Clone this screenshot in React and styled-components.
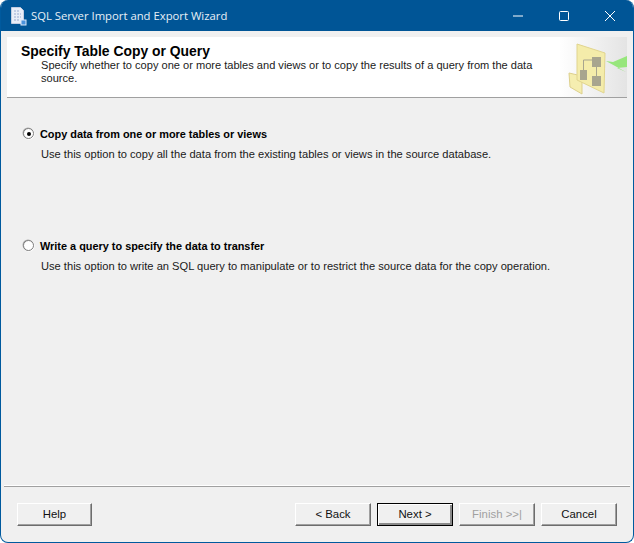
import React from "react";
import styled, { createGlobalStyle } from "styled-components";

const Global = createGlobalStyle`
  html, body { margin: 0; padding: 0; background: #ffffff; }
  #root { width: 634px; height: 543px; }
`;

const Win = styled.div`
  box-sizing: border-box;
  width: 634px;
  height: 543px;
  display: flex;
  flex-direction: column;
  background: #f0f0f0;
  border: 1px solid #005a9e;
  border-top: none;
  border-radius: 8px;
  overflow: hidden;
  font-family: "Liberation Sans", Arial, sans-serif;
  font-size: 11px;
  color: #111;
`;

const TitleBar = styled.div`
  height: 31px;
  flex: none;
  background: #005596;
  display: flex;
  align-items: center;
  padding-left: 9px;
  color: #fff;
`;

const TitleText = styled.div`
  margin-left: 4px;
  font-family: "Open Sans", "Liberation Sans", sans-serif;
  font-size: 11.3px;
  white-space: nowrap;
  color: #e8f0f7;
  flex: 1;
`;

const WinButton = styled.div`
  width: 46px;
  height: 31px;
  display: flex;
  align-items: center;
  justify-content: center;
`;

const Body = styled.div`
  flex: 1;
  display: flex;
  flex-direction: column;
  padding: 6px 6px 0 6px;
  min-height: 0;
`;

const Header = styled.div`
  height: 61px;
  box-sizing: border-box;
  flex: none;
  background: linear-gradient(90deg, #ffffff 0 89%, #e4e4e4 100%);
  border-bottom: 1px solid #a0a0a0;
  display: flex;
  position: relative;
  overflow: hidden;
`;

const HeaderText = styled.div`
  padding: 7px 0 0 14px;
  width: 520px;
`;

const HeaderTitle = styled.div`
  font-size: 13.9px;
  line-height: 15px;
  font-weight: 700;
  color: #000;
`;

const HeaderSub = styled.div`
  margin-left: 20px;
  font-size: 11.07px;
  line-height: 13px;
  color: #1a1a1a;
`;

const Art = styled.svg`
  position: absolute;
  right: 0;
  top: 0;
  filter: blur(0.35px);
`;

const Options = styled.div`
  flex: 1;
  padding-top: 28px;
  display: flex;
  flex-direction: column;
  gap: 77px;
`;

const Option = styled.div`
  display: flex;
  flex-direction: column;
  gap: 7px;
  padding-left: 16px;
`;

const OptionHead = styled.label`
  display: flex;
  align-items: center;
  gap: 6px;
  height: 15px;
  font-weight: 700;
  font-size: 10.9px;
  color: #000;
`;

const Radio = styled.span`
  box-sizing: border-box;
  width: 11px;
  height: 11px;
  border-radius: 50%;
  border: 1px solid #808080;
  background: #fff;
  box-shadow: -0.5px -0.5px 0 #a8a8a8, 0.5px 0.5px 0 #fff;
  display: flex;
  align-items: center;
  justify-content: center;
  &::after {
    content: "";
    width: 4px;
    height: 4px;
    border-radius: 50%;
    background: ${(p) => (p.$on ? "#000" : "transparent")};
  }
`;

const OptionDesc = styled.div`
  margin-left: 18px;
  font-size: 11.13px;
  line-height: 13px;
  color: #1a1a1a;
  white-space: nowrap;
`;

const Footer = styled.div`
  box-sizing: border-box;
  flex: none;
  height: 56px;
  margin: 0 -3px 0 -3px;
  border-top: 1px solid #a0a0a0;
  box-shadow: 0 -1px 0 #fff;
  display: flex;
  align-items: flex-start;
  padding: 16px 13px 0 13px;
  gap: 6px;
`;

const Spacer = styled.div`
  flex: 1;
`;

const Button = styled.div`
  box-sizing: border-box;
  width: ${(p) => (p.$narrow ? "75px" : "76px")};
  height: 23px;
  padding-bottom: 2px;
  display: flex;
  align-items: center;
  justify-content: center;
  font-size: 11.4px;
  background: #f0f0f0;
  color: ${(p) => (p.$disabled ? "#a0a0a0" : "#111")};
  border: 1px solid;
  border-color: #fff #6d6d6d #6d6d6d #fff;
  box-shadow: inset -1px -1px 0 #a0a0a0;
  ${(p) =>
    p.$default &&
    `border: 1px solid #000; box-shadow: inset 1px 1px 0 #fff, inset -2px -2px 0 #8a8a8a;`}
`;

export default function App() {
  return (
    <Win>
      <Global />
      <TitleBar>
        <svg width="17" height="20" viewBox="0 0 17 20">
          <path d="M1.5 1.5h9l3 3v13h-12z" fill="#e9eef8" stroke="#c3cde2" />
          <path d="M4 5h6M4 8h7M4 11h7M4 14h5" stroke="#9aaad0" strokeWidth="1.2" strokeDasharray="2 1" />
          <rect x="11" y="14" width="5" height="5" fill="#4b93dd" stroke="#dbe8f7" />
        </svg>
        <TitleText>SQL Server Import and Export Wizard</TitleText>
        <WinButton>
          <svg width="12" height="12" viewBox="0 0 12 12">
            <path d="M1 6h10" stroke="#fff" />
          </svg>
        </WinButton>
        <WinButton>
          <svg width="12" height="12" viewBox="0 0 12 12">
            <rect x="1.5" y="1.5" width="9" height="9" rx="1" fill="none" stroke="#fff" />
          </svg>
        </WinButton>
        <WinButton>
          <svg width="12" height="12" viewBox="0 0 12 12">
            <path d="M1 1l10 10M11 1L1 11" stroke="#fff" />
          </svg>
        </WinButton>
      </TitleBar>
      <Body>
        <Header>
          <HeaderText>
            <HeaderTitle>Specify Table Copy or Query</HeaderTitle>
            <HeaderSub>
              Specify whether to copy one or more tables and views or to copy the results of a query from the data source.
            </HeaderSub>
          </HeaderText>
          <Art width="62" height="60" viewBox="0 0 62 60">
            <path d="M4 36L17 39V57L5 50z" fill="#f5eeb0" stroke="#dccf8c" />
            <path d="M12 7L40 16L39 56L12 43z" fill="#f4ecaa" stroke="#e0d48e" />
            <rect x="27" y="20" width="9" height="10" fill="#a8a58e" />
            <rect x="15" y="33" width="7" height="10" fill="#a8a58e" />
            <rect x="27" y="39" width="9" height="10" fill="#a8a58e" />
            <path d="M27 23H18.5V33M31.5 30V39" fill="none" stroke="#a8a58e" />
            <path d="M41 24L48 25L62 19V30L52 31L61 35z" fill="#97e67c" />
          </Art>
        </Header>
        <Options>
          <Option>
            <OptionHead>
              <Radio $on />
              Copy data from one or more tables or views
            </OptionHead>
            <OptionDesc>
              Use this option to copy all the data from the existing tables or views in the source database.
            </OptionDesc>
          </Option>
          <Option>
            <OptionHead>
              <Radio />
              Write a query to specify the data to transfer
            </OptionHead>
            <OptionDesc>
              Use this option to write an SQL query to manipulate or to restrict the source data for the copy operation.
            </OptionDesc>
          </Option>
        </Options>
        <Footer>
          <Button $narrow>Help</Button>
          <Spacer />
          <Button>&lt; Back</Button>
          <Button $default>Next &gt;</Button>
          <Button $disabled>Finish &gt;&gt;|</Button>
          <Button>Cancel</Button>
        </Footer>
      </Body>
    </Win>
  );
}
